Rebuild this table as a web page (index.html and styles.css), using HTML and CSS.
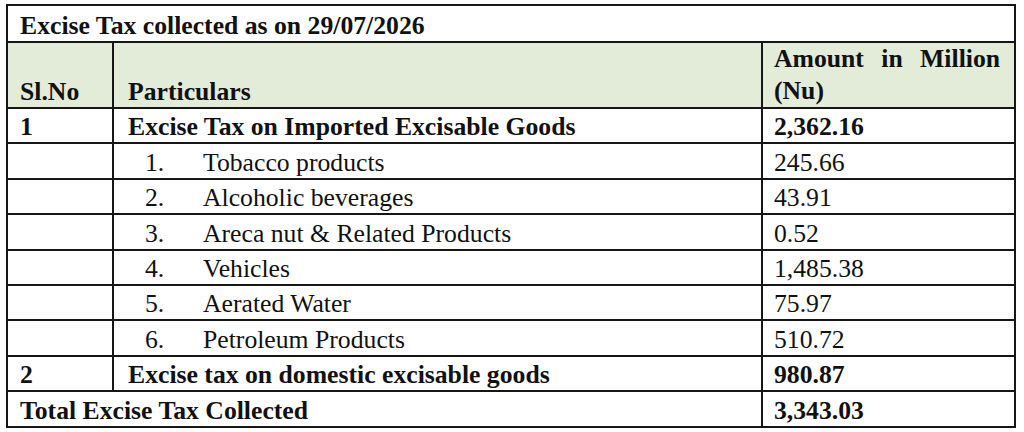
FILE: index.html
```html
<!DOCTYPE html>
<html lang="en">
<head>
<meta charset="utf-8">
<title>Excise Tax collected</title>
<link rel="stylesheet" href="styles.css">
</head>
<body>
<table class="tax">
  <colgroup>
    <col class="c-no">
    <col class="c-part">
    <col class="c-amt">
  </colgroup>
  <tbody>
    <tr class="r-title">
      <td colspan="3" class="b">Excise Tax collected as on 29/07/2026</td>
    </tr>
    <tr class="r-head">
      <td class="b">Sl.No</td>
      <td class="b part">Particulars</td>
      <td class="b amt just">Amount in Million (Nu)</td>
    </tr>
    <tr class="r-row">
      <td class="b">1</td>
      <td class="b part">Excise Tax on Imported Excisable Goods</td>
      <td class="b amt">2,362.16</td>
    </tr>
    <tr class="r-row">
      <td></td>
      <td class="sub"><span class="num">1.</span>Tobacco products</td>
      <td class="amt">245.66</td>
    </tr>
    <tr class="r-row">
      <td></td>
      <td class="sub"><span class="num">2.</span>Alcoholic beverages</td>
      <td class="amt">43.91</td>
    </tr>
    <tr class="r-row">
      <td></td>
      <td class="sub"><span class="num">3.</span>Areca nut &amp; Related Products</td>
      <td class="amt">0.52</td>
    </tr>
    <tr class="r-row">
      <td></td>
      <td class="sub"><span class="num">4.</span>Vehicles</td>
      <td class="amt">1,485.38</td>
    </tr>
    <tr class="r-row">
      <td></td>
      <td class="sub"><span class="num">5.</span>Aerated Water</td>
      <td class="amt">75.97</td>
    </tr>
    <tr class="r-row">
      <td></td>
      <td class="sub"><span class="num">6.</span>Petroleum Products</td>
      <td class="amt">510.72</td>
    </tr>
    <tr class="r-row">
      <td class="b">2</td>
      <td class="b part">Excise tax on domestic excisable goods</td>
      <td class="b amt">980.87</td>
    </tr>
    <tr class="r-row r-last">
      <td colspan="2" class="b">Total Excise Tax Collected</td>
      <td class="b amt">3,343.03</td>
    </tr>
  </tbody>
</table>
</body>
</html>
```

FILE: styles.css
```css
html, body {
  background: #ffffff;
}
body {
  margin: 4px 0 0 6px;
  font-family: "Liberation Serif", "Times New Roman", serif;
  font-size: 25.7px;
  color: #111111;
}
.tax {
  border-collapse: collapse;
  table-layout: fixed;
  width: 1008px;
}
.c-no { width: 106px; }
.c-part { width: 649px; }
.c-amt { width: 253px; }

.tax td {
  border: 2px solid #161616;
  padding: 0 12px 0 12px;
  vertical-align: bottom;
  line-height: 31px;
  white-space: nowrap;
}
.r-title { height: 37px; }
.r-head { height: 62px; }
.r-row { height: 35.4px; }

.tax .r-head td {
  background: #e3ebd9;
}
.b { font-weight: bold; }
.tax .part { padding-left: 14px; }
.tax .amt { padding-left: 11px; padding-right: 14px; }
.tax .just {
  white-space: normal;
  text-align: justify;
  line-height: 32px;
}
.tax .sub { padding-left: 31px; }
.num {
  display: inline-block;
  width: 58px;
}
```
